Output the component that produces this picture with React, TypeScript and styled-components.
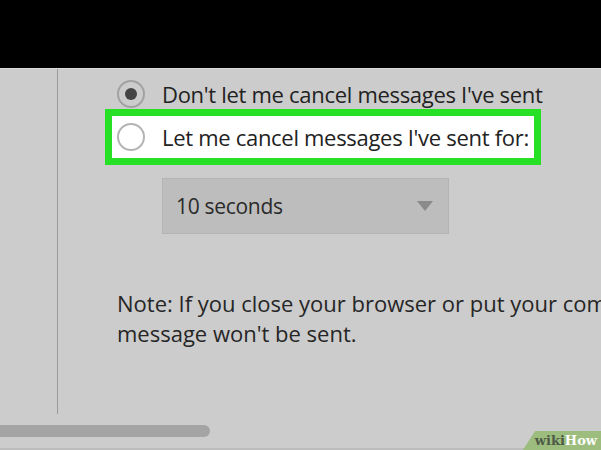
import styled, { createGlobalStyle } from "styled-components";

const GlobalStyle = createGlobalStyle`
  html, body {
    margin: 0;
    padding: 0;
    background: #cccccc;
    overflow: hidden;
  }
  body {
    font-family: "Open Sans", "Noto Sans", sans-serif;
    color: #222222;
  }
`;

const Frame = styled.div`
  position: relative;
  width: 601px;
  height: 450px;
  display: flex;
  flex-direction: column;
  overflow: hidden;
  background: #cccccc;
`;

const TopBar = styled.div`
  height: 69px;
  flex-shrink: 0;
  background: #000000;
  border-bottom: 1px solid #dcdcdc;
  box-sizing: border-box;
`;

const Body = styled.div`
  height: 345px;
  flex-shrink: 0;
  display: flex;
`;

const Sidebar = styled.div`
  width: 58px;
  flex-shrink: 0;
  box-sizing: border-box;
  border-right: 1px solid #9c9c9c;
`;

const Content = styled.div`
  flex: 1;
  min-width: 0;
  display: flex;
  flex-direction: column;
  padding-top: 11px;
`;

const OptionRow = styled.label`
  display: flex;
  align-items: center;
  gap: 17px;
  height: 28px;
  margin-left: 59px;
  font-size: 22px;
  letter-spacing: -0.3px;
  white-space: nowrap;
`;

const HighlightRow = styled(OptionRow)`
  box-sizing: border-box;
  width: 436px;
  height: 56px;
  margin-top: 1px;
  margin-left: 47px;
  padding: 0 5px;
  border: 7px solid #25e025;
  background: #ffffff;
`;

const Radio = styled.span<{ $checked?: boolean }>`
  width: 28px;
  height: 28px;
  flex-shrink: 0;
  box-sizing: border-box;
  border-radius: 50%;
  border: 2px solid ${(p) => (p.$checked ? "#a2a2a2" : "#b4b4b4")};
  display: flex;
  align-items: center;
  justify-content: center;

  &::after {
    content: "";
    display: ${(p) => (p.$checked ? "block" : "none")};
    width: 12px;
    height: 12px;
    border-radius: 50%;
    background: #444444;
  }
`;

const Select = styled.div`
  box-sizing: border-box;
  width: 287px;
  height: 56px;
  margin-top: 13px;
  margin-left: 104px;
  padding: 0 15px 0 13px;
  display: flex;
  align-items: center;
  justify-content: space-between;
  background: #bdbdbd;
  border: 1px solid #b4b4b4;
  font-size: 21px;
  letter-spacing: -0.3px;
  color: #2a2a2a;
`;

const Caret = styled.span`
  width: 0;
  height: 0;
  border-left: 8px solid transparent;
  border-right: 8px solid transparent;
  border-top: 10px solid #8a8a8a;
`;

const Note = styled.div`
  margin-top: 54px;
  margin-left: 59px;
  font-size: 22px;
  line-height: 30px;
  white-space: nowrap;
  color: #262626;
`;

const Footer = styled.div`
  flex: 1;
  box-sizing: border-box;
  padding-top: 11px;
  border-bottom: 2px solid #bcbcbc;
`;

const Scrollbar = styled.div`
  width: 210px;
  height: 12px;
  border-radius: 0 6px 6px 0;
  background: #a4a4a4;
`;

const Badge = styled.div`
  position: absolute;
  right: 0;
  bottom: 0;
  width: 78px;
  height: 19px;
  background: #9cbd7e;
  clip-path: polygon(12px 0, 100% 0, 100% 100%, 0 100%);
  display: flex;
  align-items: center;
  justify-content: flex-end;
  padding-right: 4px;
  box-sizing: border-box;
  font-family: "DejaVu Serif", "Liberation Serif", serif;
  font-weight: bold;
  font-size: 13px;
`;

const Wiki = styled.span`
  color: #4f5a46;
`;

const How = styled.span`
  color: #ffffff;
`;

export default function App() {
  return (
    <Frame>
      <GlobalStyle />
      <TopBar />
      <Body>
        <Sidebar />
        <Content>
          <OptionRow>
            <Radio $checked />
            Don't let me cancel messages I've sent
          </OptionRow>
          <HighlightRow>
            <Radio />
            Let me cancel messages I've sent for:
          </HighlightRow>
          <Select>
            10 seconds
            <Caret />
          </Select>
          <Note>
            Note: If you close your browser or put your computer to sleep before the time is up, your
            <br />
            message won't be sent.
          </Note>
        </Content>
      </Body>
      <Footer>
        <Scrollbar />
      </Footer>
      <Badge>
        <Wiki>wiki</Wiki>
        <How>How</How>
      </Badge>
    </Frame>
  );
}
